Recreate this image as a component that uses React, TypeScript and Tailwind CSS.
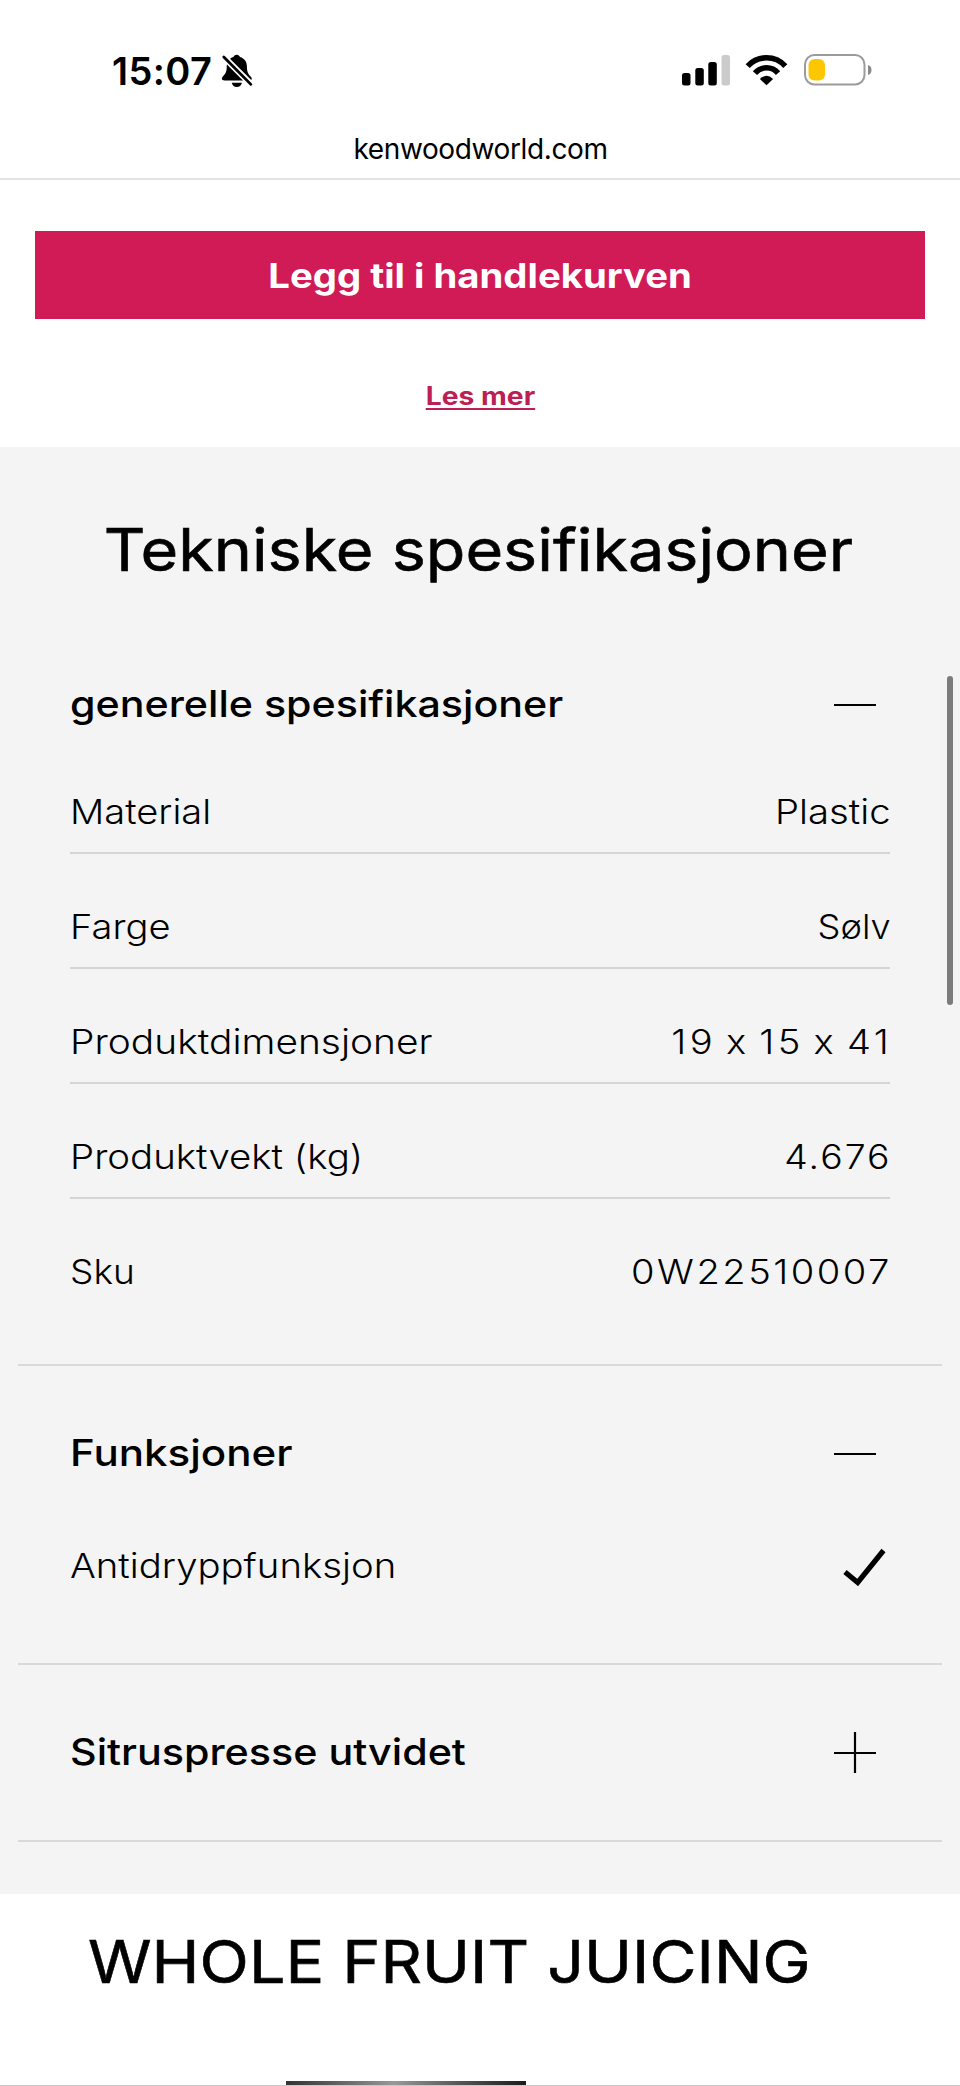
import type { ReactNode } from 'react'

type Spec = {
  label: string
  value: ReactNode
  labelClass: string
  valueClass: string
}

const generalSpecs: Spec[] = [
  {
    label: 'Material',
    value: 'Plastic',
    labelClass: 'scale-x-[1.12]',
    valueClass: '-mr-px scale-x-[1.126]',
  },
  {
    label: 'Farge',
    value: 'Sølv',
    labelClass: 'scale-x-[1.12]',
    valueClass: '-mr-px scale-x-[1.065]',
  },
  {
    label: 'Produktdimensjoner',
    value: '19 x 15 x 41',
    labelClass: 'scale-x-[1.144]',
    valueClass: '-mr-[2px] scale-x-[1.12] tracking-[3.1px] [word-spacing:-4px]',
  },
  {
    label: 'Produktvekt (kg)',
    value: '4.676',
    labelClass: 'scale-x-[1.13]',
    valueClass: '-mr-[2px] scale-x-[1.1] tracking-[1.85px]',
  },
  {
    label: 'Sku',
    value: '0W22510007',
    labelClass: 'scale-x-[1.09]',
    valueClass: '-mr-[2px] scale-x-[1.12] tracking-[2.24px]',
  },
]

function BellOffIcon() {
  return (
    <svg viewBox="420 70 96 106" className="h-[35px] w-8">
      <path
        d="M467 75c5 0 9 3 10 7c14 4 21 15 21 29c0 18 5 24 12 31c5 6 3 11-4 11H430c-8 0-10-6-5-12c8-8 12-14 12-30c0-14 7-25 20-29c1-4 5-7 10-7Z"
        fill="#000"
      />
      <path d="M452 160h31c-2 8-8 13-15.500 13s-13.500-5-15.500-13Z" fill="#000" />
      <path d="M420 74L516 170" stroke="#fff" strokeWidth="19" />
      <path
        d="M428 82L510 165"
        stroke="#000"
        strokeWidth="8.500"
        strokeLinecap="round"
      />
    </svg>
  )
}

function SignalIcon() {
  return (
    <svg viewBox="0 0 48 31" className="h-[31px] w-12">
      <rect x="0" y="18" width="8.500" height="12.500" rx="2.500" />
      <rect x="13.300" y="13" width="8.500" height="17.500" rx="2.500" />
      <rect x="26.300" y="7" width="8.500" height="23.500" rx="2.500" />
      <rect x="39.500" y="0" width="8.500" height="30.500" rx="2.500" fill="#cbcbcb" />
    </svg>
  )
}

function WifiIcon() {
  return (
    <svg viewBox="254 71 130 97" className="h-[32px] w-[43px]">
      <g fill="none" stroke="#000" strokeWidth="17">
        <path d="M262 107.500A77 77 0 0 1 376 107.500" />
        <path d="M284 129A46 46 0 0 1 354 129" />
      </g>
      <path d="M319 166L299 147Q319 127 339 147Z" />
    </svg>
  )
}

function BatteryIcon() {
  return (
    <svg viewBox="0 0 68 32" className="h-8 w-[68px]">
      <rect
        x="1"
        y="1"
        width="59.500"
        height="29.500"
        rx="9.500"
        fill="#fff"
        stroke="#9b9b9b"
        strokeWidth="2"
      />
      <rect x="4.500" y="5" width="16.500" height="21.500" rx="6" fill="#fdc700" />
      <path d="M64 11c2.500.7 3.500 2.500 3.500 5s-1 4.300-3.500 5Z" fill="#8a8a8a" />
    </svg>
  )
}

function CheckIcon() {
  return (
    <svg viewBox="0 0 44 38" className="mr-[3px] h-[38px] w-11">
      <path
        d="M2 24L14.700 34.500L40.500 2.500"
        fill="none"
        stroke="#000"
        strokeWidth="5.200"
      />
    </svg>
  )
}

function ToggleIcon({ open }: { open: boolean }) {
  return (
    <svg viewBox="0 0 42 42" className="mr-[14px] size-[42px]">
      <path
        d={open ? 'M0 22H42' : 'M0 22H42M21 1V42'}
        stroke="#000"
        strokeWidth="2.200"
      />
    </svg>
  )
}

function SpecRow({ spec, last }: { spec: Spec; last: boolean }) {
  return (
    <li
      className={`flex h-[115px] items-end justify-between border-b-2 pb-5 text-[34px] leading-10 font-light ${
        last ? 'border-transparent' : 'border-[#d5d5d5]'
      }`}
    >
      <span className={`origin-left ${spec.labelClass}`}>{spec.label}</span>
      <span className={`origin-right ${spec.valueClass}`}>{spec.value}</span>
    </li>
  )
}

function AccordionSection({
  title,
  titleClass,
  open,
  children,
}: {
  title: string
  titleClass: string
  open: boolean
  children?: ReactNode
}) {
  return (
    <section
      className={`mx-[18px] border-b-2 border-[#d9d9d9] px-[52px] pt-[57px] ${
        open ? 'pb-[50px]' : 'pb-[58px]'
      }`}
    >
      <button
        type="button"
        className="flex h-[60px] w-full items-center justify-between text-left text-[37px] font-medium"
      >
        <span className={`origin-left ${titleClass}`}>{title}</span>
        <ToggleIcon open={open} />
      </button>
      {children && <ul className="pt-[5px]">{children}</ul>}
    </section>
  )
}

export default function App() {
  return (
    <div className="relative h-[2086px] w-[960px] overflow-hidden bg-white font-['Inter',sans-serif] text-black [font-feature-settings:'calt'_0]">
      <header className="h-[180px] border-b-2 border-[#e2e2e2]">
        <div className="flex h-[130px] items-center justify-between pt-[10px] pr-[88px] pl-[112px]">
          <div className="flex items-center gap-[9px]">
            <span className="pt-px text-[38px] leading-10 font-semibold tracking-[0.4px]">
              15:07
            </span>
            <BellOffIcon />
          </div>
          <div className="flex items-center">
            <SignalIcon />
            <span className="ml-[15px]">
              <WifiIcon />
            </span>
            <span className="ml-[16px]">
              <BatteryIcon />
            </span>
          </div>
        </div>
        <p className="pl-px text-center text-[28px] leading-[38px] tracking-[-0.38px]">
          kenwoodworld.com
        </p>
      </header>

      <div className="flex flex-col items-center px-[35px] pt-[51px] pb-[31px]">
        <button
          type="button"
          className="h-[88px] w-full bg-[#d01b57] text-[34px] font-bold text-white"
        >
          <span className="inline-block scale-x-[1.126]">
            Legg til i handlekurven
          </span>
        </button>
        <a
          href="#"
          className="mt-[57px] scale-x-[1.13] text-[25px] leading-10 font-bold text-[#bd1f54] underline decoration-2 underline-offset-[3px] [text-decoration-skip-ink:none]"
        >
          Les mer
        </a>
      </div>

      <main className="bg-[#f4f4f4] pt-[67px] pb-[52px]">
        <h1 className="mr-[3px] mb-8 scale-x-[1.096] text-center text-[59px] leading-[71px] [-webkit-text-stroke:0.6px_#000]">
          Tekniske spesifikasjoner
        </h1>

        <AccordionSection
          title="generelle spesifikasjoner"
          titleClass="scale-x-[1.113]"
          open
        >
          {generalSpecs.map((spec, i) => (
            <SpecRow
              key={spec.label}
              spec={spec}
              last={i === generalSpecs.length - 1}
            />
          ))}
        </AccordionSection>

        <AccordionSection
          title="Funksjoner"
          titleClass="scale-x-[1.137]"
          open
        >
          <li className="flex h-[125px] items-end justify-between pb-[27px] text-[34px] leading-10 font-light">
            <span className="origin-left scale-x-[1.127]">
              Antidryppfunksjon
            </span>
            <CheckIcon />
          </li>
        </AccordionSection>

        <AccordionSection
          title="Sitruspresse utvidet"
          titleClass="scale-x-[1.114]"
          open={false}
        />
      </main>

      <h2 className="ml-[88px] w-fit origin-left scale-x-[1.094] pt-8 text-[59px] leading-[71px] whitespace-nowrap [-webkit-text-stroke:0.6px_#000]">
        WHOLE FRUIT JUICING
      </h2>
      {/* top edge of the product photo, cut off by the toolbar */}
      <div className="mt-[84px] ml-[286px] h-1 w-[240px] bg-linear-to-r from-[#333] via-[#999] via-45% to-[#1c1c1c]" />

      <div className="absolute bottom-0 left-0 h-px w-full bg-[#c9c9c9]" />
      <div className="absolute top-[676px] right-[7px] h-[329px] w-[6px] rounded-full bg-[#7b7b7b]" />
    </div>
  )
}
